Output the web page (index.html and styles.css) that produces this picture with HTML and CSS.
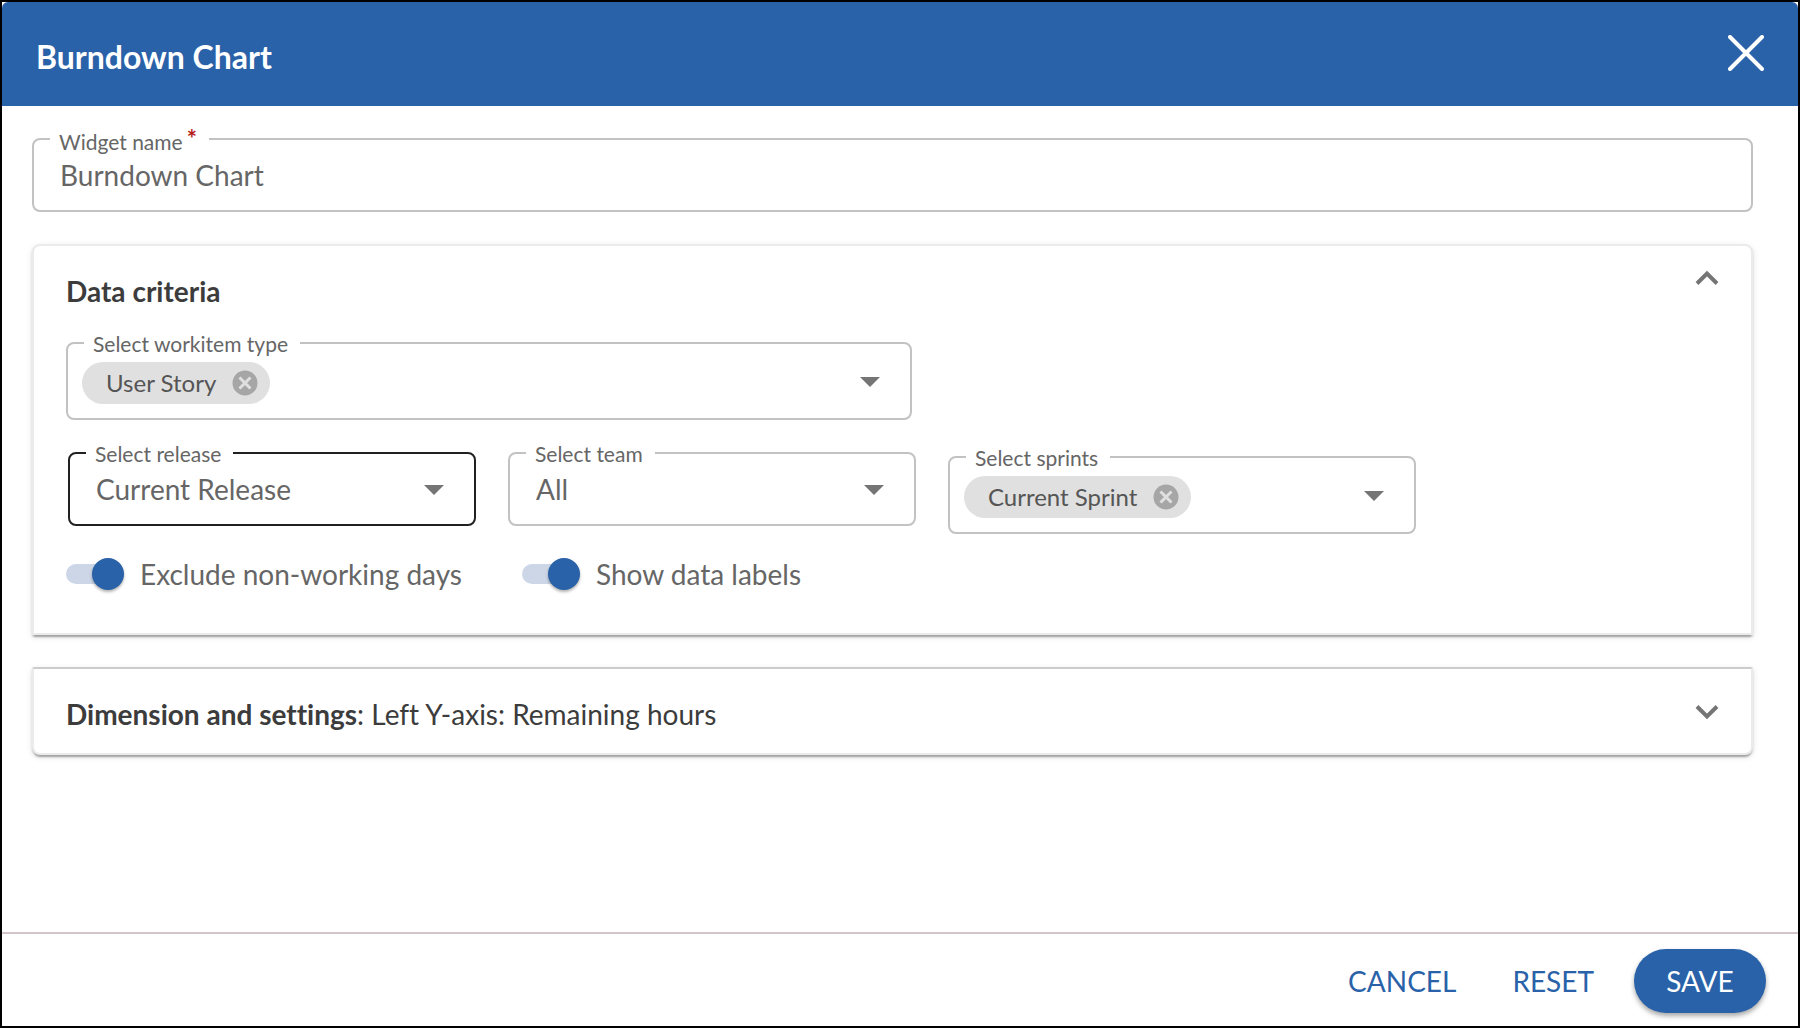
FILE: index.html
```html
<!DOCTYPE html>
<html lang="en">
<head>
    <meta charset="UTF-8">
    <meta name="viewport" content="width=device-width, initial-scale=1.0">
    <title>Burndown Chart</title>
    <link rel="stylesheet" href="styles.css">
</head>
<body>
    <form class="dialog">
        <header class="dialog-header">
            <h1>Burndown Chart</h1>
            <button type="button" class="icon-button close-button" aria-label="Close">
                <svg width="36" height="36" viewBox="0 0 36 36"><path d="M2 2L34 34M34 2L2 34" stroke="#fff" stroke-width="4" stroke-linecap="round"/></svg>
            </button>
        </header>

        <main class="dialog-body">
            <div class="field">
                <label for="widgetName">Widget name<span class="required">*</span></label>
                <input type="text" id="widgetName" value="Burndown Chart">
            </div>

            <section class="panel panel-open">
                <div class="panel-header">
                    <h2>Data criteria</h2>
                    <button type="button" class="icon-button" aria-label="Collapse data criteria">
                        <svg width="24" height="16" viewBox="0 0 24 16"><path d="M2 13.500L12 3.500L22 13.500" fill="none" stroke="#757575" stroke-width="4"/></svg>
                    </button>
                </div>

                <div class="field field-chips workitem">
                    <label for="workitemType">Select workitem type</label>
                    <span class="chip">User Story
                        <button type="button" class="icon-button" aria-label="Remove User Story">
                            <svg width="26" height="26" viewBox="0 0 26 26"><circle cx="13" cy="13" r="12.500" fill="#a6a6a6"/><path d="M7.500 7.500L18.500 18.500M18.500 7.500L7.500 18.500" stroke="#e0e0e0" stroke-width="3"/></svg>
                        </button>
                    </span>
                    <select id="workitemType"><option></option></select>
                </div>

                <div class="field-row">
                    <div class="field field-active">
                        <label for="release">Select release</label>
                        <select id="release"><option>Current Release</option></select>
                    </div>
                    <div class="field">
                        <label for="team">Select team</label>
                        <select id="team"><option>All</option></select>
                    </div>
                    <div class="field field-chips sprints">
                        <label for="sprints">Select sprints</label>
                        <span class="chip">Current Sprint
                            <button type="button" class="icon-button" aria-label="Remove Current Sprint">
                                <svg width="26" height="26" viewBox="0 0 26 26"><circle cx="13" cy="13" r="12.500" fill="#a6a6a6"/><path d="M7.500 7.500L18.500 18.500M18.500 7.500L7.500 18.500" stroke="#e0e0e0" stroke-width="3"/></svg>
                            </button>
                        </span>
                        <select id="sprints"><option></option></select>
                    </div>
                </div>

                <div class="toggles">
                    <label class="toggle"><input type="checkbox" checked>Exclude non-working days</label>
                    <label class="toggle"><input type="checkbox" checked>Show data labels</label>
                </div>
            </section>

            <section class="panel panel-closed">
                <div class="panel-header">
                    <h2>Dimension and settings<span>: Left Y-axis: Remaining hours</span></h2>
                    <button type="button" class="icon-button" aria-label="Expand dimension and settings">
                        <svg width="24" height="16" viewBox="0 0 24 16"><path d="M2 2.500L12 12.500L22 2.500" fill="none" stroke="#757575" stroke-width="4"/></svg>
                    </button>
                </div>
            </section>
        </main>

        <footer class="dialog-footer">
            <button type="button" class="text-button">CANCEL</button>
            <button type="reset" class="text-button">RESET</button>
            <button type="submit" class="save-button">SAVE</button>
        </footer>
    </form>
</body>
</html>
```
FILE: styles.css
```css
* {
    box-sizing: border-box;
}

body {
    margin: 0;
    font-family: Lato, "Liberation Sans", sans-serif;
    font-size: 28px;
    line-height: 34px;
    font-variant-ligatures: none;
    color: #666;
    background-color: #fff;
}

h1, h2 {
    margin: 0;
}

button, input, select {
    font: inherit;
    color: inherit;
}

.dialog {
    display: flex;
    flex-direction: column;
    min-height: 100vh;
    border: 2px solid #000;
}

.dialog-header {
    display: flex;
    align-items: center;
    justify-content: space-between;
    height: 104px;
    padding: 0 34px 2px;
    background-color: #2962a8;
    border-radius: 6px 6px 0 0;
    color: #fff;
}

.dialog-header h1 {
    font-size: 32px;
    line-height: 40px;
    padding-top: 8px;
}

.icon-button {
    display: flex;
    padding: 0;
    border: none;
    background: none;
    cursor: pointer;
}

.dialog-body {
    flex: 1;
    display: flex;
    flex-direction: column;
    gap: 32px;
    padding: 32px 45px 32px 30px;
}

/* outlined fields */
.field {
    position: relative;
    display: flex;
    height: 74px;
    border: 2px solid #c2c2c2;
    border-radius: 8px;
}

.field > label {
    position: absolute;
    top: -13px;
    left: 16px;
    padding: 0 12px 0 9px;
    background-color: #fff;
    font-size: 21px;
    line-height: 26px;
    white-space: nowrap;
}

.required {
    margin-left: 4px;
    color: #b71c1c;
    font-size: 24px;
    font-weight: bold;
    vertical-align: 2px;
    line-height: 1;
}

.field input, .field select {
    flex: 1;
    min-width: 0;
    padding: 0 26px;
    border: none;
    border-radius: 8px;
    outline: none;
    background: none;
}

.field select {
    appearance: none;
    cursor: pointer;
}

/* drop-down arrow */
.field:has(select)::after {
    content: "";
    position: absolute;
    top: 31px;
    right: 30px;
    border: 10px solid transparent;
    border-top-color: #757575;
    border-bottom: none;
    pointer-events: none;
}

.field-active {
    border-color: #212121;
}

.field-chips {
    height: 78px;
    padding: 18px 14px;
}

.field-chips:has(select)::after {
    top: 33px;
}

.chip {
    display: flex;
    align-items: center;
    gap: 16px;
    height: 42px;
    padding: 0 12px 0 24px;
    border-radius: 21px;
    background-color: #e0e0e0;
    color: #555;
    font-size: 24px;
    white-space: nowrap;
}

/* panels */
.panel {
    padding: 28px 32px 0;
    border: 2px solid #ebebeb;
    background-color: #fff;
    box-shadow: 0 4px 2px -2px rgba(0, 0, 0, 0.2), 0 2px 2px 0 rgba(0, 0, 0, 0.14), 0 2px 6px 0 rgba(0, 0, 0, 0.12);
}

.panel-open {
    padding-top: 24px;
    padding-bottom: 43px;
    border-radius: 8px 8px 0 0;
}

.panel-closed {
    padding-bottom: 22px;
    border-top-color: #ccc;
    border-radius: 2px 2px 8px 8px;
}

.panel-header {
    display: flex;
    align-items: center;
    justify-content: space-between;
    color: #3c3c3c;
}

.panel-header .icon-button {
    padding-bottom: 4px;
}

.panel-open .panel-header {
    align-items: flex-start;
    margin-bottom: 34px;
}

.panel-header h2 {
    font-size: 28px;
    line-height: 34px;
}

.panel-open h2 {
    padding-top: 4px;
}

.panel-header h2 span {
    font-weight: normal;
}

.workitem {
    max-width: 846px;
}

.field-row {
    display: grid;
    grid-template-columns: 408fr 408fr 468fr;
    align-items: start;
    gap: 32px;
    max-width: 1350px;
    margin-top: 32px;
    padding-left: 2px;
}

.sprints {
    margin-top: 4px;
}

/* toggles */
.toggles {
    display: flex;
    gap: 60px;
    margin-top: 24px;
}

.toggle {
    display: flex;
    align-items: center;
    gap: 16px;
    height: 32px;
    cursor: pointer;
}

.toggle input {
    appearance: none;
    position: relative;
    width: 58px;
    height: 20px;
    margin: 0;
    border-radius: 10px;
    background-color: #ccd6e6;
    cursor: pointer;
}

.toggle input::after {
    content: "";
    position: absolute;
    top: -6px;
    left: 0;
    width: 32px;
    height: 32px;
    border-radius: 50%;
    background-color: #fff;
    box-shadow: 0 2px 3px rgba(0, 0, 0, 0.3);
}

.toggle input:checked::after {
    left: 26px;
    background-color: #2962a8;
}

/* footer */
.dialog-footer {
    display: flex;
    align-items: center;
    justify-content: flex-end;
    height: 94px;
    padding: 2px 32px 0;
    border-top: 2px solid #d3c4cb;
}

.text-button {
    padding: 0 28px;
    border: none;
    background: none;
    color: #2962a8;
    cursor: pointer;
}

.save-button {
    height: 64px;
    min-width: 132px;
    margin-left: 12px;
    padding: 0 28px;
    border: none;
    border-radius: 32px;
    background-color: #2962a8;
    color: #fff;
    box-shadow: 0 3px 5px rgba(0, 0, 0, 0.35);
    cursor: pointer;
}
```
